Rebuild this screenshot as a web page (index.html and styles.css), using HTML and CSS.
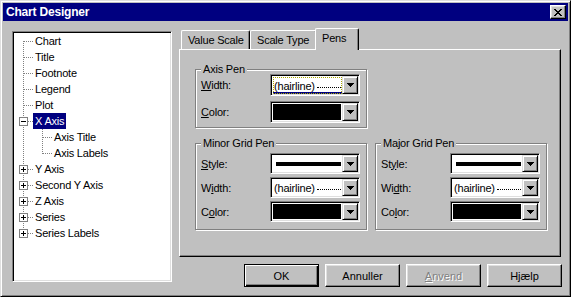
FILE: index.html
```html
<!DOCTYPE html>
<html lang="en">
<head>
    <meta charset="UTF-8">
    <title>Chart Designer</title>
    <link rel="stylesheet" href="styles.css">
</head>
<body>
<div class="window">
    <div class="titlebar">
        <span class="title">Chart Designer</span>
        <span class="close-btn">
            <svg width="8" height="7" viewBox="0 0 8 7" shape-rendering="crispEdges"><path d="M0 0h2v1H0zM6 0h2v1H6zM1 1h2v1H1zM5 1h2v1H5zM2 2h4v1H2zM3 3h2v1H3zM2 4h4v1H2zM1 5h2v1H1zM5 5h2v1H5zM0 6h2v1H0zM6 6h2v1H6z" fill="#000"/></svg>
        </span>
    </div>

    <div class="main">
        <div class="tree">
            <div class="node"><span class="conn first"></span><span class="label">Chart</span></div>
            <div class="node"><span class="conn mid"></span><span class="label">Title</span></div>
            <div class="node"><span class="conn mid"></span><span class="label">Footnote</span></div>
            <div class="node"><span class="conn mid"></span><span class="label">Legend</span></div>
            <div class="node"><span class="conn mid"></span><span class="label">Plot</span></div>
            <div class="node">
                <span class="conn mid"><svg class="box" width="9" height="9" shape-rendering="crispEdges"><rect x=".5" y=".5" width="8" height="8" fill="#fff" stroke="#808080"/><path d="M2 4.5h5" stroke="#000"/></svg></span>
                <span class="label selected">X Axis</span>
            </div>
            <div class="node"><span class="conn pass"></span><span class="conn mid"></span><span class="label">Axis Title</span></div>
            <div class="node"><span class="conn pass"></span><span class="conn last"></span><span class="label">Axis Labels</span></div>
            <div class="node">
                <span class="conn mid"><svg class="box" width="9" height="9" shape-rendering="crispEdges"><rect x=".5" y=".5" width="8" height="8" fill="#fff" stroke="#808080"/><path d="M2 4.5h5M4.5 2v5" stroke="#000"/></svg></span>
                <span class="label">Y Axis</span>
            </div>
            <div class="node">
                <span class="conn mid"><svg class="box" width="9" height="9" shape-rendering="crispEdges"><rect x=".5" y=".5" width="8" height="8" fill="#fff" stroke="#808080"/><path d="M2 4.5h5M4.5 2v5" stroke="#000"/></svg></span>
                <span class="label">Second Y Axis</span>
            </div>
            <div class="node">
                <span class="conn mid"><svg class="box" width="9" height="9" shape-rendering="crispEdges"><rect x=".5" y=".5" width="8" height="8" fill="#fff" stroke="#808080"/><path d="M2 4.5h5M4.5 2v5" stroke="#000"/></svg></span>
                <span class="label">Z Axis</span>
            </div>
            <div class="node">
                <span class="conn mid"><svg class="box" width="9" height="9" shape-rendering="crispEdges"><rect x=".5" y=".5" width="8" height="8" fill="#fff" stroke="#808080"/><path d="M2 4.5h5M4.5 2v5" stroke="#000"/></svg></span>
                <span class="label">Series</span>
            </div>
            <div class="node">
                <span class="conn last"><svg class="box" width="9" height="9" shape-rendering="crispEdges"><rect x=".5" y=".5" width="8" height="8" fill="#fff" stroke="#808080"/><path d="M2 4.5h5M4.5 2v5" stroke="#000"/></svg></span>
                <span class="label">Series Labels</span>
            </div>
        </div>

        <div class="side">
            <div class="tabs">
                <div class="tab tab-value">Value Scale</div>
                <div class="tab tab-scale">Scale Type</div>
                <div class="tab tab-pens active">Pens</div>
            </div>

            <div class="panel">
                <div class="group compact">
                    <div class="group-title">Axis Pen</div>
                    <div class="rows">
                        <div class="field-row">
                            <span><u>W</u>idth:</span>
                            <div class="combo">
                                <div class="field focus"><span class="hair"><span>(hairline)</span><span class="dots"></span></span></div>
                                <span class="drop"><svg width="7" height="4" shape-rendering="crispEdges"><path d="M0 0h7v1H0zM1 1h5v1H1zM2 2h3v1H2zM3 3h1v1H3z"/></svg></span>
                            </div>
                        </div>
                        <div class="field-row">
                            <span><u>C</u>olor:</span>
                            <div class="combo">
                                <div class="field"><span class="swatch"></span></div>
                                <span class="drop"><svg width="7" height="4" shape-rendering="crispEdges"><path d="M0 0h7v1H0zM1 1h5v1H1zM2 2h3v1H2zM3 3h1v1H3z"/></svg></span>
                            </div>
                        </div>
                    </div>
                </div>

                <div class="group-row">
                    <div class="group">
                        <div class="group-title">Minor Grid Pen</div>
                        <div class="rows">
                            <div class="field-row">
                                <span><u>S</u>tyle:</span>
                                <div class="combo">
                                    <div class="field"><span class="stroke"></span></div>
                                    <span class="drop"><svg width="7" height="4" shape-rendering="crispEdges"><path d="M0 0h7v1H0zM1 1h5v1H1zM2 2h3v1H2zM3 3h1v1H3z"/></svg></span>
                                </div>
                            </div>
                            <div class="field-row">
                                <span>W<u>i</u>dth:</span>
                                <div class="combo">
                                    <div class="field"><span class="hair"><span>(hairline)</span><span class="dots"></span></span></div>
                                    <span class="drop"><svg width="7" height="4" shape-rendering="crispEdges"><path d="M0 0h7v1H0zM1 1h5v1H1zM2 2h3v1H2zM3 3h1v1H3z"/></svg></span>
                                </div>
                            </div>
                            <div class="field-row">
                                <span>C<u>o</u>lor:</span>
                                <div class="combo">
                                    <div class="field"><span class="swatch"></span></div>
                                    <span class="drop"><svg width="7" height="4" shape-rendering="crispEdges"><path d="M0 0h7v1H0zM1 1h5v1H1zM2 2h3v1H2zM3 3h1v1H3z"/></svg></span>
                                </div>
                            </div>
                        </div>
                    </div>

                    <div class="group">
                        <div class="group-title">Major Grid Pen</div>
                        <div class="rows">
                            <div class="field-row">
                                <span>St<u>y</u>le:</span>
                                <div class="combo">
                                    <div class="field"><span class="stroke"></span></div>
                                    <span class="drop"><svg width="7" height="4" shape-rendering="crispEdges"><path d="M0 0h7v1H0zM1 1h5v1H1zM2 2h3v1H2zM3 3h1v1H3z"/></svg></span>
                                </div>
                            </div>
                            <div class="field-row">
                                <span>Wi<u>d</u>th:</span>
                                <div class="combo">
                                    <div class="field"><span class="hair"><span>(hairline)</span><span class="dots"></span></span></div>
                                    <span class="drop"><svg width="7" height="4" shape-rendering="crispEdges"><path d="M0 0h7v1H0zM1 1h5v1H1zM2 2h3v1H2zM3 3h1v1H3z"/></svg></span>
                                </div>
                            </div>
                            <div class="field-row">
                                <span>Co<u>l</u>or:</span>
                                <div class="combo">
                                    <div class="field"><span class="swatch"></span></div>
                                    <span class="drop"><svg width="7" height="4" shape-rendering="crispEdges"><path d="M0 0h7v1H0zM1 1h5v1H1zM2 2h3v1H2zM3 3h1v1H3z"/></svg></span>
                                </div>
                            </div>
                        </div>
                    </div>
                </div>
            </div>

            <div class="buttons">
                <button class="btn default">OK</button>
                <button class="btn">Annuller</button>
                <button class="btn disabled"><span><u>A</u>nvend</span></button>
                <button class="btn">Hjælp</button>
            </div>
        </div>
    </div>
</div>
</body>
</html>
```

FILE: styles.css
```css
body {
    margin: 0;
    background: #c0c0c0;
    font-family: "Liberation Sans", Arial, sans-serif;
    font-size: 11px;
    letter-spacing: -0.2px;
    color: #000;
}
.window {
    width: 571px;
    height: 297px;
    box-sizing: border-box;
    border: 1px solid;
    border-color: #dfdfdf #000 #000 #dfdfdf;
    box-shadow: inset 1px 1px #fff, inset -1px -1px #808080;
    padding: 2px;
    background: #c0c0c0;
}
.titlebar {
    height: 18px;
    background: #000080;
    color: #fff;
    display: flex;
    align-items: center;
    justify-content: space-between;
    padding: 0 2px 0 3px;
}
.title {
    font-weight: bold;
    font-size: 12px;
}
.close-btn {
    width: 16px;
    height: 14px;
    box-sizing: border-box;
    display: flex;
    align-items: center;
    justify-content: center;
    background: #c0c0c0;
    border: 1px solid;
    border-color: #fff #000 #000 #fff;
    box-shadow: inset -1px -1px #808080, inset 1px 1px #dfdfdf;
}
.main {
    display: flex;
    gap: 7px;
    padding: 7px 0 0 9px;
}

/* tree view */
.tree {
    width: 160px;
    height: 251px;
    box-sizing: border-box;
    margin-top: 3px;
    padding: 1px;
    background: #fff;
    border: 1px solid;
    border-color: #808080 #fff #fff #808080;
    box-shadow: inset 1px 1px #000, inset -1px -1px #dfdfdf;
}
.node {
    display: flex;
    height: 16px;
    line-height: 16px;
}
.conn {
    flex: none;
    width: 19px;
    height: 16px;
    display: flex;
    align-items: center;
    justify-content: center;
    background-repeat: no-repeat;
}
.conn.mid,
.conn.first,
.conn.last {
    background-image:
        repeating-linear-gradient(#808080 0 1px, transparent 1px 2px),
        repeating-linear-gradient(90deg, #808080 0 1px, transparent 1px 2px);
}
.conn.mid {
    background-size: 1px 16px, 9px 1px;
    background-position: 9px 0, 10px 8px;
}
.conn.first {
    background-size: 1px 8px, 9px 1px;
    background-position: 9px 8px, 10px 8px;
}
.conn.last {
    background-size: 1px 9px, 9px 1px;
    background-position: 9px 0, 10px 8px;
}
.conn.pass {
    background-image: repeating-linear-gradient(#808080 0 1px, transparent 1px 2px);
    background-size: 1px 16px;
    background-position: 9px 0;
}
.box {
    display: block;
}
.label {
    padding: 0 2px;
    white-space: nowrap;
}
.label.selected {
    background: #000080;
    color: #fff;
}

/* tabs */
.side {
    width: 382px;
    display: flex;
    flex-direction: column;
}
.tabs {
    display: flex;
    align-items: flex-end;
    height: 21px;
    padding-left: 2px;
}
.tab {
    box-sizing: border-box;
    height: 19px;
    padding: 1px 0 0 6px;
    line-height: 17px;
    background: #c0c0c0;
    border: 1px solid;
    border-bottom: 0;
    border-color: #fff #000 #000 #fff;
    border-radius: 2px 2px 0 0;
    box-shadow: inset -1px 0 #808080;
    white-space: nowrap;
}
.tab-value { width: 69px; }
.tab-scale { width: 67px; }
.tab-pens { width: 40px; }
.tab.active {
    width: 44px;
    height: 22px;
    margin: 0 -2px -1px;
    line-height: 16px;
    position: relative;
    z-index: 1;
}
.panel {
    height: 208px;
    box-sizing: border-box;
    padding: 19px 0 0 15px;
    border: 1px solid;
    border-color: #fff #000 #000 #fff;
    box-shadow: inset -1px -1px #808080;
}

/* group boxes */
.group {
    width: 172px;
    box-sizing: border-box;
    padding: 0 6px 7px 5px;
    border: 1px solid #808080;
    box-shadow: 1px 1px #fff, inset 1px 1px #fff;
}
.group.compact {
    padding-bottom: 4px;
}
.group-title {
    width: fit-content;
    margin-top: -7px;
    padding: 0 2px;
    line-height: 13px;
    background: #c0c0c0;
}
.group-row {
    display: flex;
    gap: 8px;
    margin-top: 15px;
}
.rows {
    display: flex;
    flex-direction: column;
    gap: 3px;
    margin-top: 3px;
}
.group.compact .rows {
    gap: 5px;
    margin-top: -2px;
}
.field-row {
    display: flex;
    align-items: center;
    justify-content: space-between;
}

/* combo boxes */
.combo {
    width: 90px;
    height: 21px;
    box-sizing: border-box;
    display: flex;
    padding: 1px;
    background: #fff;
    border: 1px solid;
    border-color: #808080 #fff #fff #808080;
    box-shadow: inset 1px 1px #000, inset -1px -1px #dfdfdf;
}
.group.compact .combo {
    height: 22px;
}
.field {
    flex: 1;
    min-width: 0;
    display: flex;
    align-items: center;
}
.stroke {
    flex: 1;
    height: 4px;
    margin: 0 1px 0 4px;
    background: #000;
}
.swatch {
    flex: 1;
    align-self: stretch;
    margin: 1px;
    background: #000;
}
.hair {
    flex: 1;
    display: flex;
    align-items: center;
    align-self: stretch;
    padding-left: 2px;
    white-space: nowrap;
}
.dots {
    flex: 1;
    height: 0;
    margin: 3px 1px 0 2px;
    border-top: 1px dotted #000;
}
.field.focus .hair {
    margin: 1px 0 0 1px;
    padding-left: 1px;
    outline: 1px dotted #a8a800;
    outline-offset: -1px;
    box-shadow: inset 0 -2px #000080;
}
.drop {
    flex: none;
    width: 16px;
    box-sizing: border-box;
    display: flex;
    align-items: center;
    justify-content: center;
    background: #c0c0c0;
    border: 1px solid;
    border-color: #dfdfdf #000 #000 #dfdfdf;
    box-shadow: inset 1px 1px #fff, inset -1px -1px #808080;
}

/* buttons */
.buttons {
    display: flex;
    justify-content: flex-end;
    gap: 6px;
    margin: 7px -1px 0 0;
}
.btn {
    width: 75px;
    height: 23px;
    box-sizing: border-box;
    padding: 0;
    font: inherit;
    color: #000;
    background: #c0c0c0;
    border: 1px solid;
    border-color: #fff #000 #000 #fff;
    box-shadow: inset -1px -1px #808080, inset 1px 1px #dfdfdf;
}
.btn.default {
    border-color: #000;
    box-shadow: inset 1px 1px #fff, inset -1px -1px #000, inset -2px -2px #808080;
}
.btn.disabled {
    color: #808080;
    text-shadow: 1px 1px #fff;
}
```
